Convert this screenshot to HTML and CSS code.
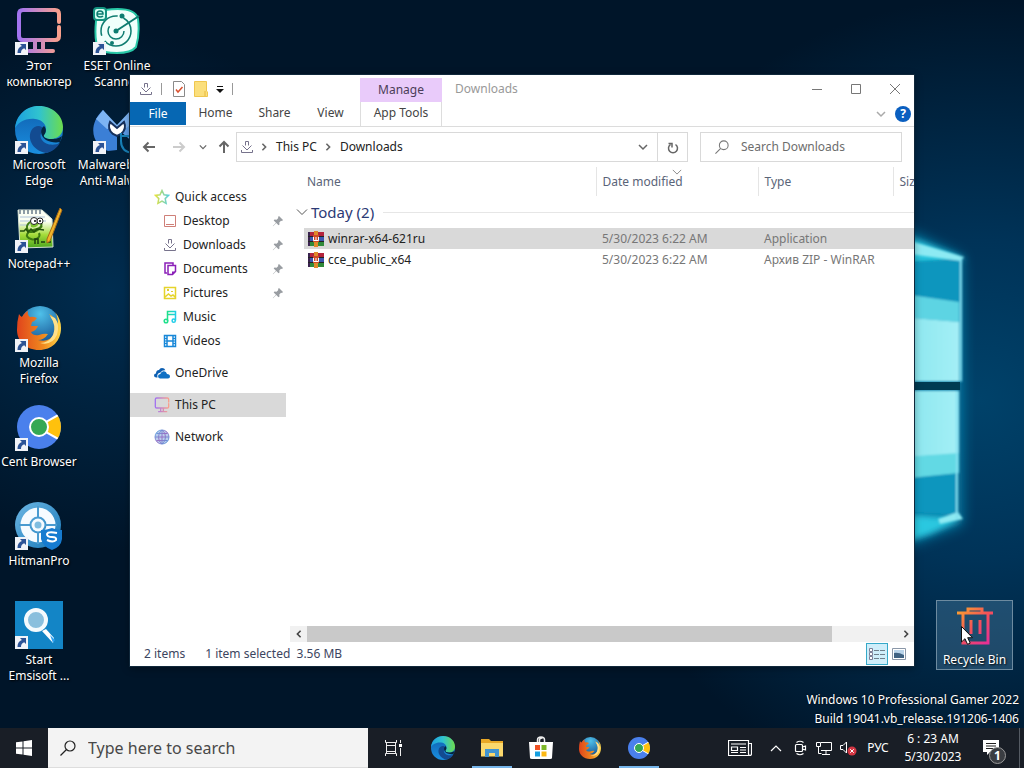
FILE: index.html
```html
<!DOCTYPE html>
<html lang="en">
<head>
<meta charset="utf-8">
<title>Downloads</title>
<link rel="stylesheet" href="styles.css">
</head>
<body>
<svg class="defs" aria-hidden="true">
  <defs>
    <linearGradient id="g-pc" x1="0" x2="1"><stop offset="0" stop-color="#a274f0"/><stop offset="1" stop-color="#f9a08c"/></linearGradient>
    <linearGradient id="g-star" x1="0" x2="1"><stop offset="0" stop-color="#e6e23c"/><stop offset="1" stop-color="#57cfe0"/></linearGradient>
    <linearGradient id="g-net" x1="0" x2="1" y2="1"><stop offset="0" stop-color="#4fb3e8"/><stop offset=".5" stop-color="#9a6fc4"/><stop offset="1" stop-color="#4aa3df"/></linearGradient>
    <linearGradient id="g-music" x1="0" x2="1"><stop offset="0" stop-color="#1fe08c"/><stop offset="1" stop-color="#1fcde8"/></linearGradient>
    <linearGradient id="g-bin" x1="0" x2="1" y2="1"><stop offset="0" stop-color="#fba52c"/><stop offset=".5" stop-color="#f4505a"/><stop offset="1" stop-color="#e22aa0"/></linearGradient>
    <linearGradient id="g-edge-top" x1="0" x2="1"><stop offset="0" stop-color="#1c9fe0"/><stop offset=".5" stop-color="#30c3cf"/><stop offset="1" stop-color="#6ddc4c"/></linearGradient>
    <linearGradient id="g-edge-mid" x1="0" x2="0" y2="1"><stop offset="0" stop-color="#0f5fae"/><stop offset="1" stop-color="#1a8fe0"/></linearGradient>
    <linearGradient id="g-fox" x1="0" x2="1"><stop offset="0" stop-color="#e0441c"/><stop offset=".6" stop-color="#f08a1e"/><stop offset="1" stop-color="#ffd84a"/></linearGradient>
    <radialGradient id="g-globe" cx=".5" cy=".2" r=".8"><stop offset="0" stop-color="#4fc1ea"/><stop offset="1" stop-color="#124a8c"/></radialGradient>
    <linearGradient id="g-npp" x1="0" x2="0" y2="1"><stop offset=".3" stop-color="#fbfff4"/><stop offset=".65" stop-color="#a5dc3a"/><stop offset="1" stop-color="#4aa51e"/></linearGradient>
    <linearGradient id="g-hit" x1="0" x2="1" y2="1"><stop offset="0" stop-color="#6db7e4"/><stop offset="1" stop-color="#1878b8"/></linearGradient>

    <symbol id="i-link" viewBox="0 0 13 13"><rect width="13" height="13" fill="#f1f3f8"/><path d="M5 2h6v6L9.200 6.200C7 7 6 8.500 6 11H2.500C2.500 7.500 4 5 6.900 4z" fill="#2c5396"/></symbol>
    <symbol id="i-pc" viewBox="0 0 48 48"><path d="M44 15V7q0-4-4-4H8Q4 3 4 7v22q0 4 4 4h32q4 0 4-4V20M20 34v10M28 34v10M14 44h24" fill="none" stroke="url(#g-pc)" stroke-width="4" stroke-linecap="round"/></symbol>
    <symbol id="i-eset" viewBox="0 0 48 48"><path d="M12 3Q42-1 45 12q2 15-2 28-5 6-19 6T6 42Q1 35 3 14 4 5 12 3z" fill="#effffb" stroke="#29c9a8" stroke-width="2"/><circle cx="23" cy="24" r="15" fill="none" stroke="#0d7c70" stroke-width="1.500" stroke-dasharray="36 6 30 6"/><circle cx="23" cy="24" r="8" fill="none" stroke="#0d7c70" stroke-width="1.500" stroke-dasharray="30 20"/><path d="M23 24 46 9" stroke="#0d7c70" stroke-width="2"/><circle cx="23" cy="24" r="2.500" fill="#0d7c70"/><circle cx="29" cy="9" r="2.500" fill="#0d7c70"/><circle cx="19" cy="36" r="2" fill="#0d7c70"/><rect x="1" y="1" width="12" height="12" rx="3" fill="#d4fff3" stroke="#13927f" stroke-width="2"/><path d="M4 7h6q0-3-3-3T4 7q0 3 3 3 2 0 3-1" fill="none" stroke="#0d7c70" stroke-width="1.500"/></symbol>
    <symbol id="i-edge" viewBox="0 0 48 48"><circle cx="24" cy="24" r="24" fill="url(#g-edge-mid)"/><path d="M0 23C1 8 12 0 24 0c14 0 24 10 24 21 0 8-6 12-12 12-5 0-8-2-7-4 5-6 1-15-9-16C10 12 2 17 0 23z" fill="url(#g-edge-top)"/><path d="M16 25c-4 9 3 20 15 22 6-1 11-5 14-10-6 3-15 2-18-3-3-4-1-8 2-10-2-6-10-5-13 1z" fill="#134b91"/><path d="M29 20c-4 3-4 10 2 14 4 2 9 3 14 2l2-6c-4 3-8 3-11 3-5 0-8-2-7-4 2-2 3-6 0-9z" fill="#04243f"/></symbol>
    <symbol id="i-mal" viewBox="0 0 48 48"><path d="M10 4C-2 15-2 30 5 38q4 5 10 7l9-1V22z" fill="#3b7fd6"/><path d="M38 4c11 11 11 26 4 34L26 24z" fill="#5f9eea"/><path d="M10 4 3 13l11 10h18L45 13 38 4 24 19z" fill="#7db4f3"/><path d="M17 16q-3 7 3 12l4 2 4-2q6-5 3-12l-7 6z" fill="#fff" stroke="#16305c" stroke-width="2"/><path d="M29 30h9M28 27v8q0 11 12 12" fill="none" stroke="#177fb6" stroke-width="2"/></symbol>
    <symbol id="i-npp" viewBox="0 0 48 48"><path d="M3 5h24l10 9 1 28-33 1z" fill="url(#g-npp)" stroke="#d4e0d2"/><path d="M5 4v5M9 4v5M13 4v5M17 4v5M21 4v5M25 4v5" stroke="#6b7d8c" stroke-width="1.500"/><path d="M5 12h25M5 16h26M5 20h10" stroke="#aec3d8"/><path d="M27 21c-7 8-16 8-15 0 2-6 9-5 12-4 4 1 3 6-2 7-11 2-13 8-6 10 5 2 10-2 8-6" fill="none" stroke="#3c7a12" stroke-width="2"/><path d="M5 26h4l2-2 2 3 3-3 3 3 3-3 7 1" fill="none" stroke="#24510b" stroke-width="1.500"/><path d="M15 17q6-5 10 0-3 7-9 5z" fill="#7bc32b"/><circle cx="19" cy="16" r="3.500" fill="#fff" stroke="#222"/><circle cx="25" cy="16" r="3" fill="#fff" stroke="#222"/><circle cx="20" cy="16" r="1" /><circle cx="25" cy="16" r="1"/><path d="M20 39v-5h3v5M26 37h4M32 37h4" fill="none" stroke="#1b3c10" stroke-width="1.500"/><path d="m32 34 13-31 2 2-12 31-3 2z" fill="#f0b429" stroke="#a96916"/></symbol>
    <symbol id="i-fox" viewBox="0 0 48 48"><circle cx="25" cy="22" r="20" fill="url(#g-globe)"/><path d="M4 10q1 2 3 3 3-5 6-6-1 4 2 6 3-1 7 1-2 3-5 4l-1 4q4 0 7 0-2 5-7 6 2 4 8 3 5-2 9-1-4 6-10 6 11 3 16-6 3-11-5-20 6 3 9 10 0-7-3-12 6 7 6 16c0 13-9 22-22 22S2 37 2 26q0-9 2-16z" fill="url(#g-fox)"/><path d="M35 12q7 10 3 19-4 8-13 8 12 3 17-8 3-10-2-17z" fill="#ffe08a"/></symbol>
    <symbol id="i-cent" viewBox="0 0 48 48"><clipPath id="cent-disc"><circle cx="24" cy="24" r="22"/></clipPath><g clip-path="url(#cent-disc)"><path d="M0 0h48v48H0z" fill="#4a80ec"/><path d="M22 24 54 6v36z" fill="#ffc10d" stroke="#fff" stroke-width="2"/></g><circle cx="24" cy="24" r="9" fill="#35a853" stroke="#fff" stroke-width="2"/></symbol>
    <symbol id="i-hit" viewBox="0 0 48 48"><circle cx="23" cy="23" r="23" fill="url(#g-hit)"/><circle cx="23" cy="23" r="13" fill="none" stroke="#f6fbff" stroke-width="9"/><circle cx="23" cy="23" r="6.500" fill="#f6fbff"/><circle cx="23" cy="23" r="3.500" fill="#7fbde0"/><path d="M23 4v12M4 23h12M30 23h12M23 30v12" stroke="#4a9bd0" stroke-width="2"/><path d="M26 28q6 0 11-2 4 2 10 2v9q-1 8-10 11-9-3-11-11z" fill="#167bd0"/><path d="M42 31q-9-2-10 1 0 3 5 3t4 3q-3 3-9 0" fill="none" stroke="#fff" stroke-width="2"/></symbol>
    <symbol id="i-ems" viewBox="0 0 48 48"><rect width="48" height="48" fill="#1385c6"/><circle cx="21" cy="19" r="10" fill="#8abfdd" stroke="#f5fafd" stroke-width="4"/><path d="m27 30 4-2 8 9-1 5z" fill="#fff"/><path d="m35 34 5 5-2 3z" fill="#2aa0f2"/></symbol>
    <symbol id="i-bin" viewBox="0 0 40 42"><path d="M2 8h36M13 7V4h14v3M8 9v29h25V9M16 15v14M25 15v14" fill="none" stroke="url(#g-bin)" stroke-width="3"/></symbol>
    <symbol id="i-dl" viewBox="0 0 14 14"><path d="M5.500 5.500v-4h3v4M2.500 5.500 7 10l4.500-4.500M1.500 10v2.500h11V10" fill="none" stroke="#77738c"/></symbol>
    <symbol id="i-chev" viewBox="0 0 10 10"><path d="m1 3 4 4 4-4" fill="none" stroke="currentColor" stroke-width="1.500"/></symbol>
    <symbol id="i-thin" viewBox="0 0 12 12"><path d="m1 3.500 5 5 5-5" fill="none" stroke="currentColor"/></symbol>
    <symbol id="i-right" viewBox="0 0 10 10"><path d="m3 1 4 4-4 4" fill="none" stroke="currentColor" stroke-width="2"/></symbol>
    <symbol id="i-back" viewBox="0 0 14 14"><path d="M13 7H2M6.500 2.500 2 7l4.500 4.500" fill="none" stroke="currentColor" stroke-width="2"/></symbol>
    <symbol id="i-search" viewBox="0 0 16 16"><circle cx="10" cy="6" r="5" fill="none" stroke="currentColor" stroke-width="1.200"/><path d="m6.500 9.500-6 6" stroke="currentColor" stroke-width="1.200"/></symbol>
    <symbol id="i-pin" viewBox="0 0 12 12"><path d="m7 1 4 4-1 1-1-.3L7.300 7.400 7.500 9.500 6.500 10.300 4.300 8 1 11.200.8 11 4 7.700 1.700 5.500 2.500 4.500l2.100.2L6.300 3 6 2z" fill="#999da2"/></symbol>
    <symbol id="i-rar" viewBox="0 0 16 16"><path d="M0 1h16v5H0z" fill="#b3233c"/><path d="M0 6h16v5H0z" fill="#3c56b0"/><path d="M0 11h16v4H0z" fill="#2f8a3a"/><path d="M0 1h2v14H0z" fill="#3a2350"/><path d="M0 5.500h16M0 10.500h16" stroke="#222"/><path d="M6 0h4v16H6z" fill="#e08a2a"/><path d="M5 4h6v7H5z" fill="#cf4a28"/><path d="M5.500 6v3.500h5V6M8 6v3" fill="none" stroke="#fff"/></symbol>
  </defs>
</svg>

<main class="desktop">
  <svg class="wallpaper" viewBox="0 0 1024 768" preserveAspectRatio="xMaxYMid slice" aria-hidden="true">
    <defs>
      <radialGradient id="w-glow" gradientUnits="userSpaceOnUse" cx="980" cy="400" r="400"><stop offset="0" stop-color="#00426a"/><stop offset=".4" stop-color="#003358" /><stop offset="1" stop-color="#003358" stop-opacity="0"/></radialGradient>
      <radialGradient id="w-left" gradientUnits="userSpaceOnUse" cx="110" cy="290" r="260"><stop offset="0" stop-color="#002d50"/><stop offset="1" stop-color="#002d50" stop-opacity="0"/></radialGradient>
      <linearGradient id="w-pane" x1="0" x2="1"><stop offset="0" stop-color="#83e3ec"/><stop offset="1" stop-color="#a4eff6"/></linearGradient>
      <filter id="w-soft" x="-50%" y="-50%" width="200%" height="200%"><feGaussianBlur stdDeviation="7"/></filter>
      <filter id="w-ray" x="-50%" y="-50%" width="200%" height="200%"><feGaussianBlur stdDeviation="3"/></filter>
      <filter id="w-edge" x="-50%" y="-50%" width="200%" height="200%"><feGaussianBlur stdDeviation="1"/></filter>
    </defs>
    <rect width="1024" height="768" fill="#001529"/>
    <rect width="1024" height="768" fill="url(#w-left)"/>
    <rect width="1024" height="768" fill="url(#w-glow)"/>
    <path d="M890 222 962 258V524L890 552z" fill="#079fc9" opacity=".7" filter="url(#w-soft)"/>
    <path d="M880 226 966 259 940 262 880 264zM880 512 962 519 930 534 880 550z" fill="#2cc8e0" filter="url(#w-ray)"/>
    <g filter="url(#w-edge)">
      <path d="M890 264 962 259V382H890zM890 390h68V515l-68-4z" fill="#0796be"/>
      <path d="M910 241 964 257 961 261 910 254zM938 519 958 512 963 519 940 524z" fill="#8deaf3"/>
      <path d="M890 292 959 302V322L890 316z" fill="#5dd4e3"/>
      <path d="M890 316 959 322V381H890zM890 391h69v63l-69 4z" fill="url(#w-pane)"/>
      <path d="M890 458 959 453V473L890 480z" fill="#62d9e4"/>
      <path d="M961 257V381M957 391V519" stroke="#82dff0" stroke-width="2"/>
    </g>
    <path d="M890 382h70v8h-70z" fill="#003b52"/>
  </svg>

  <nav class="shortcuts" aria-label="Desktop">
    <button class="shortcut c1"><span class="pic"><svg><use href="#i-pc"/></svg><svg class="link"><use href="#i-link"/></svg></span><span>Этот<br>компьютер</span></button>
    <button class="shortcut c2"><span class="pic"><svg><use href="#i-eset"/></svg><svg class="link"><use href="#i-link"/></svg></span><span>ESET Online<br>Scanner</span></button>
    <button class="shortcut c1"><span class="pic"><svg><use href="#i-edge"/></svg><svg class="link"><use href="#i-link"/></svg></span><span>Microsoft<br>Edge</span></button>
    <button class="shortcut c2"><span class="pic"><svg><use href="#i-mal"/></svg><svg class="link"><use href="#i-link"/></svg></span><span>Malwarebytes<br>Anti-Malware</span></button>
    <button class="shortcut c1"><span class="pic"><svg><use href="#i-npp"/></svg><svg class="link"><use href="#i-link"/></svg></span><span>Notepad++</span></button>
    <button class="shortcut c1"><span class="pic"><svg><use href="#i-fox"/></svg><svg class="link"><use href="#i-link"/></svg></span><span>Mozilla<br>Firefox</span></button>
    <button class="shortcut c1"><span class="pic"><svg><use href="#i-cent"/></svg><svg class="link"><use href="#i-link"/></svg></span><span>Cent Browser</span></button>
    <button class="shortcut c1"><span class="pic"><svg><use href="#i-hit"/></svg><svg class="link"><use href="#i-link"/></svg></span><span>HitmanPro</span></button>
    <button class="shortcut c1"><span class="pic"><svg><use href="#i-ems"/></svg><svg class="link"><use href="#i-link"/></svg></span><span>Start<br>Emsisoft ...</span></button>
  </nav>

  <button class="recycle"><svg class="bin"><use href="#i-bin"/></svg><span>Recycle Bin</span>
    <svg class="cursor" viewBox="0 0 12 19" aria-hidden="true"><path d="M.5.5v15.500l3.500-3.300 2.500 5.600 2.700-1.200-2.500-5.400h4.800z" fill="#fff" stroke="#111"/></svg>
  </button>
  <p class="build">Windows 10 Professional Gamer 2022<br>Build 19041.vb_release.191206-1406</p>

  <section class="window" aria-label="Downloads">
    <header class="titlebar">
      <div class="quick">
        <svg class="s14"><use href="#i-dl"/></svg><i class="bar"></i>
        <button class="plain" aria-label="Properties"><svg width="14" height="16" viewBox="0 0 14 16"><path d="M1.500.5h8l3 3v12h-11z" fill="#fff" stroke="#8a8a8a"/><path d="m4 8.500 2 2.500 4.500-5" fill="none" stroke="#d9502e" stroke-width="1.500"/></svg></button>
        <button class="plain" aria-label="New folder"><svg width="14" height="16" viewBox="0 0 14 16"><path d="M.5.5h12V10l1 1v4.500H.5z" fill="#fbdf7c" stroke="#efc64e"/><path d="M11 10v5" stroke="#e8b93c"/></svg></button>
        <button class="plain" aria-label="Customize"><svg width="8" height="8" viewBox="0 0 8 8"><path d="M1 1.500h6" stroke="#111"/><path d="M0 4h8L4 8z" fill="#111"/></svg></button><i class="bar"></i>
      </div>
      <span class="manage">Manage</span>
      <h1>Downloads</h1>
      <div class="controls">
        <button class="plain" aria-label="Minimize"><svg width="10" height="10"><path d="M0 5.500h10" stroke="#777"/></svg></button>
        <button class="plain" aria-label="Maximize"><svg width="10" height="10"><path d="M.5.5h9v9h-9z" fill="none" stroke="#777"/></svg></button>
        <button class="plain" aria-label="Close"><svg width="10" height="10"><path d="m0 0 10 10M10 0 0 10" stroke="#777"/></svg></button>
      </div>
    </header>
    <div class="ribbon">
      <button class="tab file">File</button><button class="tab home">Home</button><button class="tab share">Share</button><button class="tab view">View</button><button class="tab app">App Tools</button>
      <div class="help">
        <button class="plain grey" aria-label="Expand the ribbon"><svg class="s10"><use href="#i-chev"/></svg></button>
        <button class="question" aria-label="Help">?</button>
      </div>
    </div>
    <div class="address">
      <button class="plain nav-btn" aria-label="Back"><svg class="s14"><use href="#i-back"/></svg></button>
      <button class="plain nav-btn off" aria-label="Forward"><svg class="s14 flip"><use href="#i-back"/></svg></button>
      <button class="plain recent" aria-label="Recent"><svg class="s8"><use href="#i-chev"/></svg></button>
      <button class="plain up" aria-label="Up"><svg class="s14 turn"><use href="#i-back"/></svg></button>
      <div class="crumbs">
        <svg class="s14"><use href="#i-dl"/></svg>
        <svg class="s8"><use href="#i-right"/></svg><a href="#">This PC</a>
        <svg class="s8"><use href="#i-right"/></svg><a href="#">Downloads</a>
        <button class="plain drop" aria-label="Previous locations"><svg class="s10 bold"><use href="#i-chev"/></svg></button>
        <button class="plain refresh" aria-label="Refresh"><svg width="12" height="13" viewBox="0 0 12 13"><path d="M8.500 3.500a4.500 4.500 0 1 1-5 0M1.500 2.500h3.500v4" fill="none" stroke="#666" stroke-width="1.500"/></svg></button>
      </div>
      <label class="find"><svg class="s14"><use href="#i-search"/></svg><input type="text" placeholder="Search Downloads" aria-label="Search Downloads"></label>
    </div>

    <div class="body">
      <nav class="tree" aria-label="Folders">
        <a href="#"><svg width="16" height="16" viewBox="0 0 16 16"><path d="m8 1.500 2 4.300 4.600.6-3.400 3.200.9 4.700L8 12l-4.100 2.300.9-4.700L1.400 6.400 6 5.800z" fill="none" stroke="url(#g-star)" stroke-width="1.500"/></svg>Quick access</a>
        <a href="#" class="sub"><svg width="14" height="14"><path d="M1.500 1.500h11v11h-11zM3 10.500h8" fill="none" stroke="#cf7f78"/></svg>Desktop<svg class="pin"><use href="#i-pin"/></svg></a>
        <a href="#" class="sub"><svg class="s14"><use href="#i-dl"/></svg>Downloads<svg class="pin"><use href="#i-pin"/></svg></a>
        <a href="#" class="sub"><svg width="14" height="14"><path d="M4 11H2V1h8v2M5 3.500h7.500v6l-3 3H5z" fill="none" stroke="#8a1fb8" stroke-width="1.500"/><path d="M9 13V9.500h4z" fill="#8a1fb8"/></svg>Documents<svg class="pin"><use href="#i-pin"/></svg></a>
        <a href="#" class="sub"><svg width="14" height="14"><path d="M1.500 1.500h11v11h-11zM2 11l3.500-3 2.500 2 2-1 2 2" fill="none" stroke="#e5d42c" stroke-width="1.500"/><path d="M4 3h2v2H4zM8 5h2v1H8z" fill="#dfce30"/></svg>Pictures<svg class="pin"><use href="#i-pin"/></svg></a>
        <a href="#" class="sub"><svg width="14" height="14"><path d="M4.500 11V1.500h8v9M4.500 4.500h8" fill="none" stroke="url(#g-music)" stroke-width="1.500"/><circle cx="3" cy="11" r="1.800" fill="none" stroke="#1fe08c" stroke-width="1.500"/><circle cx="10.700" cy="10.700" r="1.600" fill="none" stroke="#1fcde8" stroke-width="1.500"/></svg>Music</a>
        <a href="#" class="sub"><svg width="14" height="14"><path d="M1.500 1.500h11v11h-11zM4 1v12M10 1v12M4 7h6" fill="none" stroke="#1787d8" stroke-width="1.500"/><path d="M1 4.500h3M1 7h3M1 9.500h3M10 4.500h3M10 7h3M10 9.500h3" stroke="#1787d8"/></svg>Videos</a>
        <a href="#" class="top"><svg width="16" height="16" viewBox="0 0 16 16"><path d="M3.500 12.500H2.300Q0 12.500 0 10.500q0-1.800 2-2Q2 5 5 5q.8-2 3-2 2.500 0 3.400 2.300Q8 5 6.500 7.500 3.500 8 3.300 10.500z" fill="#0d5fb2"/><path d="M6 13.500q-2-.2-2-2.400 0-2 2.300-2.200Q7.500 6 10 6.300q2.400.2 3 2.700 3 .3 3 2.500 0 2-2 2z" fill="#0f70c4"/></svg>OneDrive</a>
        <a href="#" class="top here"><svg width="16" height="16"><use href="#i-pc"/></svg>This PC</a>
        <a href="#" class="top"><svg width="16" height="16"><circle cx="8" cy="8" r="7" fill="#b9cdec"/><path d="M8 1a7 7 0 1 0 0 14A7 7 0 1 0 8 1C3.500 4 3.500 12 8 15M8 1c4.500 3 4.500 11 0 14M8 1v14M1 8h14M2.500 4.500h11M2.500 11.500h11" fill="none" stroke="url(#g-net)"/></svg>Network</a>
      </nav>
      <div class="content">
        <div class="list">
          <table>
            <colgroup><col class="w-gut"><col class="w-name"><col class="w-date"><col class="w-type"><col class="w-size"></colgroup>
            <thead><tr><th colspan="2" class="name">Name</th><th>Date modified<svg class="sort"><use href="#i-thin"/></svg></th><th>Type</th><th>Size</th></tr></thead>
            <tbody>
              <tr class="group"><td colspan="5"><div><svg class="s12"><use href="#i-thin"/></svg><span>Today (2)</span><hr></div></td></tr>
              <tr class="sel"><td></td><td><svg class="rar"><use href="#i-rar"/></svg>winrar-x64-621ru</td><td>5/30/2023 6:22 AM</td><td>Application</td><td></td></tr>
              <tr><td></td><td><svg class="rar"><use href="#i-rar"/></svg>cce_public_x64</td><td>5/30/2023 6:22 AM</td><td>Архив ZIP - WinRAR</td><td></td></tr>
            </tbody>
          </table>
        </div>
        <div class="scroll">
          <button class="plain" aria-label="Scroll left"><svg class="s8 flip"><use href="#i-right"/></svg></button>
          <span class="track"><span class="thumb"></span></span>
          <button class="plain" aria-label="Scroll right"><svg class="s8"><use href="#i-right"/></svg></button>
        </div>
      </div>
    </div>
    <footer class="status">
      <span>2 items</span><span>1 item selected&nbsp; 3.56 MB</span>
      <button class="mode on" aria-label="Details"><svg width="18" height="14"><path d="M1.500 1.500h3v3h-3zM1.500 5.500h3v3h-3zM1.500 9.500h3v3h-3z" fill="#fff" stroke="#7d7f96"/><path d="M6 3.500h5M6 7.500h5M6 11.500h5M12 3.500h5M12 7.500h5M12 11.500h5" stroke="#6f7f8c"/></svg></button>
      <button class="mode" aria-label="Large icons"><svg width="14" height="12"><path d="M.5.500h13v11H.5z" fill="#fff" stroke="#8a97a8"/><path d="M2 2h10v8H2z" fill="#b9d4ea"/><path d="M2 5q4-1 10 2v3H2z" fill="#3f6282"/></svg></button>
    </footer>
  </section>
</main>

<footer class="taskbar">
  <button class="start" aria-label="Start"><svg width="16" height="16"><path d="M0 2.300 6.500 1.400V7.500H0zM7.500 1.200 16 0v7.500H7.500zM0 8.500h6.500v6.100L0 13.700zM7.500 8.500H16V16l-8.500-1.200z" fill="#fff"/></svg></button>
  <label class="search"><svg width="16" height="16"><use href="#i-search"/></svg><input type="text" placeholder="Type here to search" aria-label="Type here to search"></label>
  <button class="view-btn" aria-label="Task View"><svg width="17" height="16"><path d="M.5 0v2.500h11V0M1.500 5.500h9v6h-9zM.5 16v-2.500h11V16M15.500 0v3M15.500 8v8M1.500 2v12M10.500 2v12" fill="none" stroke="#eee"/><path d="M14 4h3v3h-3z" fill="#fff"/></svg></button>
  <button class="app-btn" aria-label="Microsoft Edge"><svg width="24" height="24"><use href="#i-edge"/></svg></button>
  <button class="app-btn run" aria-label="File Explorer"><svg width="22" height="20" viewBox="0 0 22 20"><path d="M0 1h8l2 2h12v15H0z" fill="#e9a826"/><path d="M0 5h22v13.500H0z" fill="#fbd86c"/><path d="M4 11h14v8h-4v-4H8v4H4z" fill="#4294d0"/></svg></button>
  <button class="app-btn" aria-label="Microsoft Store"><svg width="24" height="24"><path d="M8.500 7V4q0-3 3.500-3t3.500 3v3M10.500 6V4q0-2 3-2" fill="none" stroke="#eee" stroke-width="1.500"/><path d="M0 6h24l-1 16q0 1-2 1H3q-2 0-2-1z" fill="#fff"/><path d="M6 9h5v5H6z" fill="#ef5125"/><path d="M12.500 9h5v5h-5z" fill="#7eb829"/><path d="M6 15.500h5v5H6z" fill="#159fe0"/><path d="M12.500 15.500h5v5h-5z" fill="#fdb813"/></svg></button>
  <button class="app-btn" aria-label="Mozilla Firefox"><svg width="24" height="24"><use href="#i-fox"/></svg></button>
  <button class="app-btn run" aria-label="Cent Browser"><svg width="24" height="24"><use href="#i-cent"/></svg></button>
  <div class="tray">
    <button class="news" aria-label="News"><svg width="24" height="16"><path d="M20.500 3.500V.5H.5V15.500h21.500q1.500 0 1.500-2V3.500h-3v10q0 2 1.500 2M3 4h15M3 12.500h7M12 7.500h6M12 10h6M12 12.500h6M3.500 7h6v3.500h-6z" fill="none" stroke="#fff" stroke-width="1.200"/></svg></button>
    <button class="t24 arrow" aria-label="Show hidden icons"><svg width="12" height="8"><path d="m1 7 5-5 5 5" fill="none" stroke="#fff" stroke-width="1.200"/></svg></button>
    <button class="t24" aria-label="Meet Now"><svg width="13" height="16"><path d="M2.500 2.500Q6 0 9.500 2.500M2.500 13.500Q6 16 9.500 13.500M1.500 5.500q0-1 1-1h5q1 0 1 1v5q0 1-1 1h-5q-1 0-1-1zM8.500 7l3-1v4l-3-1" fill="none" stroke="#fff" stroke-width="1.200"/></svg></button>
    <button class="t24" aria-label="Network"><svg width="17" height="15"><path d="M5 1.500h10.500v8H5M10 9.500v3.500M6 13.500h8M.5 1.500h4v4h-4zM2.500 5.500v7h3" fill="none" stroke="#fff"/></svg></button>
    <button class="t24" aria-label="Volume"><svg width="17" height="15"><path d="M.5 4.500H3l3.500-3.500v11L3 8.500H.5z" fill="none" stroke="#fff"/><circle cx="12" cy="10" r="4.500" fill="#d33643"/><path d="m10.200 8.200 3.600 3.600M13.800 8.200l-3.600 3.600" stroke="#fff"/></svg></button>
    <button class="lang">РУС</button>
    <button class="clock">6 : 23 AM<br>5/30/2023</button>
    <button class="note" aria-label="Notifications"><svg width="17" height="16"><path d="M0 0h16v12H7l-3 3v-3H0z" fill="#fff"/><path d="M3 3.500h10M3 6h10M3 8.500h7" stroke="#222"/></svg><span class="badge">1</span></button>
    <button class="peek" aria-label="Show desktop"></button>
  </div>
</footer>
</body>
</html>
```
FILE: styles.css
```css
* { box-sizing: border-box; }
body {
  margin: 0;
  height: 100vh;
  display: flex;
  flex-direction: column;
  overflow: hidden;
  background: #001529;
  font: 12px/16px "Noto Sans", "Open Sans", sans-serif;
  color: #222;
}
button, input { font: inherit; color: inherit; border: 0; background: none; padding: 0; margin: 0; }
a { color: inherit; text-decoration: none; }
svg { display: block; flex: none; }
.defs { position: absolute; width: 0; height: 0; }
.plain { display: flex; align-items: center; justify-content: center; }
.s8 { width: 8px; height: 8px; }
.s10 { width: 10px; height: 10px; }
.s12 { width: 12px; height: 12px; }
.s14 { width: 14px; height: 14px; }
.flip { transform: rotate(180deg); }
.turn { transform: rotate(90deg); }

.desktop { flex: 1; position: relative; min-height: 0; }
.wallpaper { position: absolute; left: 0; top: 0; width: 100vw; height: 100vh; }

.shortcuts {
  position: absolute;
  left: 0;
  top: 7px;
  display: grid;
  grid-template-columns: 78px 78px;
  grid-auto-rows: 99px;
}
.shortcut {
  display: flex;
  flex-direction: column;
  align-items: center;
  gap: 3px;
  color: #fff;
  text-shadow: 1px 1px 2px #000;
  white-space: nowrap;
}
.c1 { grid-column: 1; }
.c2 { grid-column: 2; }
.pic { position: relative; width: 48px; height: 48px; }
.pic svg { width: 48px; height: 48px; }
.pic .link { position: absolute; left: 0; bottom: 0; width: 13px; height: 13px; }

.recycle {
  position: absolute;
  right: 11px;
  bottom: 58px;
  width: 77px;
  height: 70px;
  display: flex;
  flex-direction: column;
  align-items: center;
  gap: 5px;
  padding-top: 4px;
  color: #fff;
  text-shadow: 1px 1px 2px #000;
  background: rgba(110, 165, 200, .28);
  border: 1px solid #6d8ba0;
}
.bin { width: 40px; height: 42px; }
.cursor { position: absolute; left: 24px; top: 25px; width: 12px; height: 19px; }
.build {
  position: absolute;
  right: 5px;
  bottom: 0;
  margin: 0;
  text-align: right;
  line-height: 19px;
  color: #fff;
  text-shadow: 0 0 2px #000;
}

.window {
  position: absolute;
  left: 130px;
  right: 110px;
  top: 75px;
  bottom: 62px;
  display: flex;
  flex-direction: column;
  background: #fff;
  box-shadow: 0 0 0 1px #10283b, 0 2px 8px rgba(0, 0, 0, .4);
}
.titlebar { display: flex; align-items: flex-end; height: 27px; }
.quick { width: 230px; height: 27px; padding-left: 9px; display: flex; align-items: center; gap: 8px; }
.bar { width: 1px; height: 12px; margin-right: 2px; background: #999; }
.manage { width: 82px; height: 24px; line-height: 23px; text-align: center; background: #e9cbfa; color: #4b3d58; }
h1 { margin: 0 0 0 13px; font-size: 12px; font-weight: 400; line-height: 27px; color: #999; }
.controls { margin-left: auto; display: flex; height: 27px; }
.controls .plain { width: 39px; }

.ribbon { display: flex; height: 25px; border-bottom: 1px solid #dcdcdc; }
.tab { color: #444; padding-bottom: 2px; }
.ribbon .file { width: 56px; height: 23px; padding: 0; background: #0667b3; color: #fff; }
.home, .share { width: 59px; }
.view { width: 53px; margin-right: 3px; }
.app { width: 82px; border: solid #ddd; border-width: 0 1px; }
.help { margin-left: auto; display: flex; align-items: center; gap: 9px; padding-right: 3px; }
.grey { color: #aaa; }
.question { width: 16px; height: 16px; border-radius: 50%; background: #0a5fc0; color: #fff; font-weight: 700; line-height: 16px; }

.address { display: flex; align-items: center; height: 40px; padding-right: 12px; color: #666; }
.nav-btn { width: 30px; }
.nav-btn:first-child { width: 34px; padding-left: 4px; }
.off { color: #ccc; }
.recent { width: 18px; }
.up { width: 24px; }
.crumbs { flex: 1; display: flex; align-items: center; height: 30px; border: 1px solid #d9d9d9; padding-left: 3px; }
.crumbs a { color: #222; margin: 0 7px 0 8px; }
.crumbs .s14 { margin-right: 6px; }
.drop { margin-left: auto; width: 28px; height: 28px; }
.refresh { width: 30px; height: 28px; border-left: 1px solid #d9d9d9; }
.bold { stroke-width: 2px; }
.find { display: flex; align-items: center; gap: 12px; width: 202px; height: 30px; margin-left: 12px; padding-left: 14px; border: 1px solid #d9d9d9; color: #777; }
.find input { width: 100%; min-width: 0; }
.find input::placeholder { color: #6d6d6d; opacity: 1; }

.body { flex: 1; min-height: 0; display: flex; }
.tree { width: 160px; padding-top: 18px; flex: none; color: #222; }
.tree a { display: flex; align-items: center; gap: 5px; height: 24px; width: 156px; padding-left: 24px; }
.tree .sub { padding-left: 33px; padding-right: 2px; gap: 6px; }
.tree .top { margin-top: 8px; }
.tree .here { background: #d9d9d9; }
.tree .pin { width: 12px; height: 12px; margin-left: auto; }
.content { flex: 1; min-width: 0; display: flex; flex-direction: column; }
.list { flex: 1; overflow: hidden; padding-left: 6px; }
table { width: 658px; min-width: 100%; table-layout: fixed; border-collapse: collapse; }
.w-gut { width: 8px; }
.w-name { width: 292px; }
.w-date { width: 162px; }
.w-type { width: 135px; }
th, td { padding: 0 0 0 6px; text-align: left; font-weight: 400; white-space: nowrap; color: #777; }
th { position: relative; height: 29px; border-right: 1px solid #e5e5e5; color: #5a6478; }
th.name { padding-left: 11px; }
.sort { position: absolute; left: 75px; top: 0; width: 10px; height: 10px; color: #777; }
td { height: 21px; }
td:nth-child(2) { color: #222; padding-left: 4px; }
.rar { display: inline-block; width: 16px; height: 16px; margin-right: 4px; vertical-align: top; }
.sel td:not(:first-child) { background: #d9d9d9; }
.group td { height: 32px; padding: 0; }
.group div { display: flex; align-items: center; gap: 3px; font-size: 15px; line-height: 20px; color: #2c3a75; }
.group .s12 { color: #555; }
.group hr { flex: 1; margin: 0 0 0 6px; border: 0; border-top: 1px solid #e6e6e6; }
.scroll { display: flex; height: 16px; background: #f1f1f1; color: #444; }
.scroll .plain { width: 17px; }
.track { flex: 1; display: flex; }
.thumb { width: 89%; background: #c9c9c9; }
.status { display: flex; align-items: center; height: 24px; padding: 0 4px 0 14px; color: #3c4560; }
.status span { margin-right: 20px; }
.mode { width: 22px; height: 22px; display: flex; align-items: center; justify-content: center; }
.on { margin-left: auto; background: #cfeefa; border: 1px solid #36a9c9; }

.taskbar { position: relative; display: flex; height: 40px; background: #191e26; color: #fff; }
.taskbar button { display: flex; align-items: center; justify-content: center; }
.start { width: 48px; }
.search { flex: 0 1 320px; display: flex; align-items: center; gap: 12px; padding-left: 12px; background: #f3f3f3; color: #222; border: 1px solid #ddd; border-width: 0 0 1px; }
.search input { width: 100%; min-width: 0; font-size: 16px; line-height: 24px; }
.search input::placeholder { color: #484848; opacity: 1; }
.view-btn { width: 50px; }
.app-btn { width: 49px; }
.run { background: linear-gradient(#76b5ea, #76b5ea) center bottom / 40px 2px no-repeat; }
.tray { margin-left: auto; display: flex; }
.t24, .news { width: 24px; }
.arrow { margin-left: 12px; }
.lang { width: 36px; }
.clock { width: 74px; line-height: 18px; }
.taskbar .note { position: relative; width: 49px; padding-right: 6px; }
.badge { position: absolute; right: 13px; bottom: 4px; width: 17px; height: 17px; border: 1px solid #999; border-radius: 50%; background: #3a3d42; font-weight: 700; line-height: 15px; }
.peek { width: 5px; }
.taskbar .peek { border-left: 1px solid #555b63; }
```
